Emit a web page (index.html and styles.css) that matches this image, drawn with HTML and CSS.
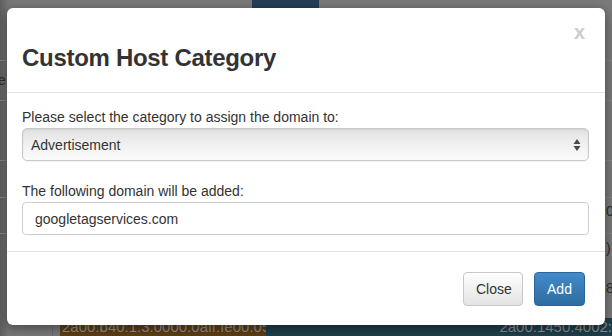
FILE: index.html
```html
<!DOCTYPE html>
<html lang="en">
<head>
    <meta charset="UTF-8">
    <title>Custom Host Category</title>
    <link rel="stylesheet" href="styles.css">
</head>
<body>
    <!-- page behind the dimmed backdrop -->
    <div class="backdrop">
        <div class="top-tab"></div>
        <div class="row-line" style="top: 60px"></div>
        <div class="row-line" style="top: 100px"></div>
        <div class="row-line" style="top: 160px"></div>
        <div class="row-line" style="top: 197px"></div>
        <div class="row-line" style="top: 233px"></div>
        <span class="peek peek-left">e</span>
        <span class="peek peek-right" style="top: 203px">0</span>
        <span class="peek peek-right" style="top: 240px">)</span>
        <span class="peek peek-right" style="top: 280px">8</span>
        <div class="bottom-row">
            <div class="cell-gap"></div>
            <div class="cell-orange">2a00:b40:1:3:0000:0aff:fe00:0500:540</div>
            <div class="cell-teal">2a00:1450:4002:</div>
        </div>
    </div>

    <div class="modal">
        <div class="modal-header">
            <button class="close">x</button>
            <h3 class="modal-title">Custom Host Category</h3>
        </div>
        <div class="modal-body">
            <label class="field-label">Please select the category to assign the domain to:</label>
            <div class="select-box">
                <span>Advertisement</span>
                <svg class="arrows" width="8" height="14" viewBox="0 0 8 14">
                    <path d="M4 1 L7.5 6 H0.5 Z M4 13 L7.5 8 H0.5 Z" fill="#4a4a4a"/>
                </svg>
            </div>
            <label class="field-label second">The following domain will be added:</label>
            <div class="text-input">googletagservices.com</div>
        </div>
        <div class="modal-footer">
            <button class="btn btn-default">Close</button>
            <button class="btn btn-primary">Add</button>
        </div>
    </div>
</body>
</html>
```

FILE: styles.css
```css
body {
    margin: 0;
    width: 612px;
    height: 336px;
    overflow: hidden;
    background: #7a7a7a;
    font-family: "Liberation Sans", Arial, sans-serif;
    color: #333;
    position: relative;
}

.backdrop {
    position: absolute;
    inset: 0;
    background: linear-gradient(to right, #5e5e5e 0px, #767676 8px, #7a7a7a 20px);
}

.top-tab {
    position: absolute;
    left: 252px;
    top: 0;
    width: 67px;
    height: 8px;
    background: #243f58;
}

.row-line {
    position: absolute;
    left: 0;
    right: 0;
    height: 1px;
    background: #868686;
}

.peek {
    position: absolute;
    font-size: 14px;
    color: #2c2c2c;
}

.peek-left {
    left: -2px;
    top: 72px;
}

.peek-right {
    left: 606px;
}

.bottom-row {
    position: absolute;
    left: 0;
    right: 0;
    top: 318px;
    height: 18px;
    display: flex;
    font-size: 15px;
    line-height: 18px;
    color: #8f8f8f;
    overflow: hidden;
}

.cell-gap {
    width: 52px;
    border-right: 1px solid #6a6a6a;
    margin-right: 7px;
}

.cell-orange {
    width: 204px;
    background: #5d3d14;
    padding-left: 2px;
    white-space: nowrap;
    overflow: hidden;
}

.cell-teal {
    flex: 1;
    background: #1e3f4b;
    text-align: right;
    white-space: nowrap;
}

.modal {
    position: relative;
    margin: 8px 0 0 7px;
    width: 598px;
    height: 317px;
    background: #fff;
    border-radius: 6px;
    box-shadow: 0 3px 12px rgba(0, 0, 0, 0.45);
    display: flex;
    flex-direction: column;
}

.modal-header {
    height: 85px;
    box-sizing: border-box;
    border-bottom: 1px solid #e5e5e5;
    padding: 14px 20px 0 15px;
    display: flex;
    flex-direction: column;
}

.close {
    align-self: flex-end;
    background: none;
    border: none;
    padding: 0;
    font-family: inherit;
    font-size: 20px;
    font-weight: bold;
    line-height: 20px;
    color: #cdcdcd;
}

.modal-title {
    margin: 2px 0 0;
    font-size: 24px;
    line-height: 28px;
    font-weight: bold;
    letter-spacing: -0.3px;
    color: #333;
}

.modal-body {
    padding: 14px 16px 16px 15px;
    border-bottom: 1px solid #e5e5e5;
}

.field-label {
    display: block;
    font-size: 14px;
    line-height: 20px;
    margin-bottom: 1px;
}

.field-label.second {
    margin-top: 20px;
}

.select-box {
    height: 33px;
    box-sizing: border-box;
    border: 1px solid #c9c9c9;
    border-radius: 5px;
    background: linear-gradient(#e2e2e2, #f3f3f3 60%, #fbfbfb);
    box-shadow: inset 0 1px 2px rgba(0, 0, 0, 0.08), 0 1px 1px rgba(0, 0, 0, 0.05);
    display: flex;
    align-items: center;
    justify-content: space-between;
    padding: 0 7px 0 8px;
    font-size: 14px;
}

.text-input {
    height: 33px;
    box-sizing: border-box;
    border: 1px solid #cfcfcf;
    border-radius: 4px;
    display: flex;
    align-items: center;
    padding-left: 12px;
    font-size: 14px;
}

.modal-footer {
    flex: 1;
    display: flex;
    justify-content: flex-end;
    align-items: center;
    gap: 11px;
    padding-right: 20px;
}

.btn {
    height: 34px;
    box-sizing: border-box;
    border-radius: 4px;
    font-family: inherit;
    font-size: 14px;
    padding: 0 12px;
}

.btn-default {
    width: 60px;
    color: #333;
    border: 1px solid #c8c8c8;
    background: linear-gradient(#ffffff, #e3e3e3);
}

.btn-primary {
    width: 51px;
    color: #fff;
    border: 1px solid #2b669a;
    background: linear-gradient(#428bca, #2d6ca2);
}
```
